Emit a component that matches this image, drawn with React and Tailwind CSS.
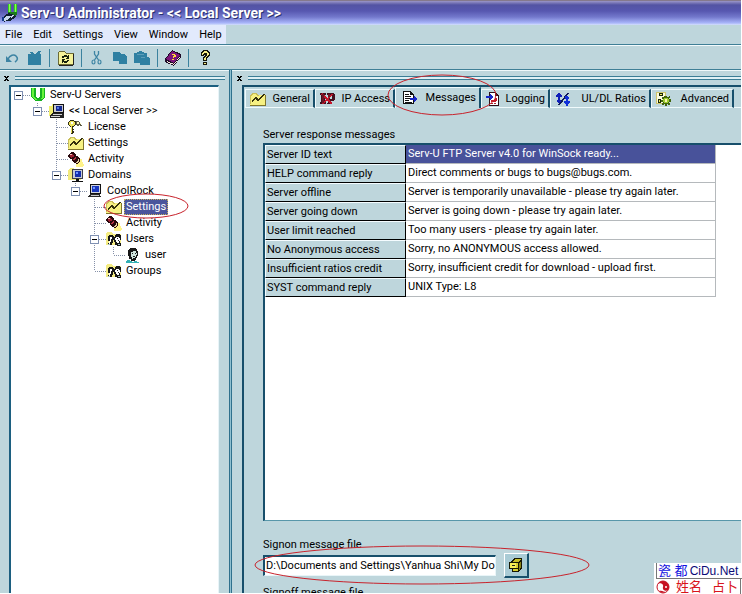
import React from "react";

const svgProps = { shapeRendering: "crispEdges", "aria-hidden": true, className: "block shrink-0" };

function Icon({ w = 16, h = 16, children }) {
  return (
    <svg {...svgProps} width={w} height={h} viewBox={`0 0 ${w} ${h}`} fill="none">
      {children}
    </svg>
  );
}

const AppIcon = () => (
  <Icon w={18} h={18}>
    <path d="M7 0h3v8H7zM13 0h3v8h-3z" fill="#35d11c" />
    <path d="M8 0h1v9H8zM14 0h1v9h-1z" fill="#8bff50" />
    <path d="M7 8h9v2l-2 2H9l-2-2z" fill="#1c7a1c" />
    <path d="M1 16l3-5 4-2 5 2 2 2-6 4H5l-2 1z" fill="#102030" />
    <path d="M2 15l3-3h3l2 1-4 3-3 1zM9 12l3-1 1 1-3 2z" fill="#c8d8ee" />
    <path d="M1 13h2v4H1z" fill="#153b8c" />
  </Icon>
);

const UndoIcon = () => (
  <svg width="16" height="16" viewBox="0 0 16 16" fill="none" className="block shrink-0" aria-hidden="true">
    <path d="M2 6v6h6z" fill="#3d84a3" />
    <path d="M4 9c2-4 6-5 8-3s2 4-1 6" stroke="#3d84a3" strokeWidth="1.600" />
  </svg>
);
const StopIcon = () => (
  <Icon>
    <path d="M2 4h3l-1-2h2l3 2 4-3 2 0-1 3h1v11H2z" fill="#2f80a2" />
  </Icon>
);
const RefreshFolderIcon = () => (
  <Icon w={17}>
    <path d="M1 14V3l2-2h4l2 2h7v11z" fill="#f4f299" stroke="#6b6a35" />
    <path d="M2 15h14M16 4v11" stroke="#222" />
    <path d="M5 8V6h2V5h3v1h1V5h1v4H9V8h1V7H7v1zM5 13V9h3v1H7v1h3v-1h2v1h-1v1h-1v1H7v-1H6v1z" fill="#18220c" />
  </Icon>
);
const CutIcon = () => (
  <svg width="16" height="16" viewBox="0 0 16 16" fill="none" stroke="#3d84a3" className="block shrink-0" aria-hidden="true">
    <path d="M5.500 1v3l4 6M9.500 1v3l-4 6" strokeWidth="1.300" />
    <ellipse cx="4.500" cy="12" rx="1.500" ry="2" strokeWidth="1.200" />
    <ellipse cx="10.500" cy="12" rx="1.500" ry="2" strokeWidth="1.200" />
  </svg>
);
const CopyIcon = () => (
  <Icon>
    <path d="M2 2h6l2 2h3l4 4v6H8v-3H2z" fill="#2f80a2" />
  </Icon>
);
const PasteIcon = () => (
  <Icon w={17}>
    <path d="M1 3h3V2h2V1h3v1h2v1h3v4h1l2 2v6H7v-2H1z" fill="#2f80a2" />
    <path d="M4 4.500h7M8 7.500h4" stroke="#5c9db8" />
  </Icon>
);
const BookIcon = () => (
  <Icon>
    <path d="M0 9L7 0l9 4v3l-7 9-9-4z" fill="#1d0a28" />
    <path d="M1 9l6-8 8 4-6 8z" fill="#7d1479" />
    <path d="M2 11l7 3 6-8v1l-6 8-7-3z" fill="#f5e9d8" />
    <path d="M7 4h3v1h1v2H9v1H8V6h1V5H7zM7 9h2v1H7z" fill="#ffdb3c" />
  </Icon>
);
const HelpIcon = () => (
  <Icon w={11}>
    <path d="M1 2h1V1h1V0h5v1h1v1h1v4H9v1H8v1H7v3H3V7h1V6h1V5H4v1H1zM3 12h4v3H3z" fill="#16160a" />
    <path d="M2 3h1V2h1V1h3v1h1v1h1v2H8v1H7v1H6v3H4V8h1V7h1V6h1V3H4v1H3v1H2zM4 13h2v1H4z" fill="#f6ee85" />
  </Icon>
);

const ServersIcon = () => (
  <Icon>
    <path d="M1 1h5v8l1 2h2l1-2V1h5v9l-3 4H5l-4-4z" fill="#17b321" />
    <path d="M2 1h2v9l3 3H5l-3-3zM12 1h2v9l-2 2h-1l1-2z" fill="#67f43c" />
  </Icon>
);
const ServerIcon = () => (
  <Icon>
    <path d="M0 3h3V1h3v2h4v10H0z" fill="#f2ee70" />
    <path d="M4 1h11v9H4z" fill="#111" />
    <path d="M5 2h9v7H5z" fill="#c9c9cf" />
    <path d="M7 3h6v5H7z" fill="#142a92" />
    <path d="M8 4h2v2H8z" fill="#5274e4" />
    <path d="M3 10h11l1 1v4H1v-2z" fill="#222" />
    <path d="M4 11h9v1H3zM2 13h9v1H2z" fill="#d5d5d5" />
  </Icon>
);
const KeysIcon = () => (
  <Icon>
    <path d="M2 1h4v1h2v4H7v1H6v1H5v2h1v1H5v1h1v2H5v1H3V8H2V7H1V6H0V3h1V2h1z" fill="#312e12" />
    <path d="M2 2h4v1h1v3H6v1H4v7H3V7H2V6H1V3h1z" fill="#efe45c" />
    <path d="M3 3h2v2H3z" fill="#fff" />
    <path d="M8 2h3v1h1v1h1v2h1v1h-2V6h-1v1H9V6H8z" fill="#5d5b45" />
    <path d="M9 3h2v2H9zM12 4h1v1h-1z" fill="#f8f3c0" />
  </Icon>
);
const SettingsIcon = () => (
  <Icon>
    <path d="M0 13V4l2-2h4l2 2h7v10H0z" fill="#f6f182" />
    <path d="M0 14.500h15.500V4" stroke="#80752c" />
    <path d="M0.500 13V4.500h1v-1h1v-1h4v1h1v1H9" stroke="#c9be58" />
    <path d="M2 11V9h1V8h1V7h1V6h2v1h1v1h1V7h1V6h1V5h1V4h1V3h2v1h-1v1h-1v1h-1v1h-1v1h-1v1H9v1H7V9H6V8H5v1H4v1H3v1z" fill="#34310d" />
  </Icon>
);
const ActivityIcon = () => (
  <Icon>
    <path d="M9 11l4-4 3 7-1 2H8z" fill="#fff38a" />
    <path d="M0 4h1V3h1V2h1V1h3v1h1v1h1v2h2v1h1v1h1v4h-1v1h-1v1H8v-1H6v-1H5v-1H4V8H2V7H1V6H0z" fill="#28070c" />
    <path d="M2 4h1V3h2v1h1v2H4v1H3V6H2z" fill="#9a1e30" />
    <path d="M2 3h2v1H2z" fill="#efb4b4" />
    <path d="M8 11h1v-1h1V8h1v3h-1v1H8z" fill="#e0d0a4" />
    <path d="M5 8h1V7h1V6h1v2H7v1H5z" fill="#b53547" />
  </Icon>
);
const DomainsIcon = () => (
  <Icon>
    <path d="M0 3l2-2h4l1 2h6v10H0z" fill="#f2e97c" />
    <path d="M4 2h11v10H4z" fill="#3f3f49" />
    <path d="M5 3h9v8H5z" fill="#c7cbd5" />
    <path d="M7 4h6v6H7z" fill="#1630ad" />
    <path d="M8 5h2v2H8z" fill="#6d95ff" />
    <path d="M8 12h3v2h4v1H4v-1h4z" fill="#111" />
  </Icon>
);
const ComputerIcon = () => (
  <Icon>
    <path d="M3 1h11v10H3z" fill="#111" />
    <path d="M4 2h9v8H4z" fill="#cfd3df" />
    <path d="M5 3h7v6H5z" fill="#1937be" />
    <path d="M6 4h2v2H6z" fill="#7199ff" />
    <path d="M4 11h9l1 3H1v-1z" fill="#292929" />
    <path d="M4 12h8v1H3z" fill="#ccc" />
  </Icon>
);
const UsersIcon = () => (
  <Icon>
    <path d="M0 3l1-2h5l1 2h8v11H0z" fill="#f4ec83" />
    <path d="M3 4h4v1h1v1h1V4h1V3h4v1h1v5h-1v3h1v3h-4v-1H9v-3H8V9H7v3H6v2H2v-2h1v-2H2V5h1z" fill="#171717" />
    <path d="M4 6h2v2H5v3H4v2H3v-3h1zM10 6h3v1h1v3h-1v2h-2v-1h-1V9H9V7h1z" fill="#fff" />
    <path d="M11 7h1v1h-1zM12 9h1v1h-1z" fill="#222" />
    <path d="M2 13h2v1H2zM12 13h2v1h-2z" fill="#a9c9c8" />
  </Icon>
);
const UserIcon = () => (
  <Icon>
    <path d="M4 2h1V1h6v1h1v2h1v5h-1v2h-1v2h-1v1H6v-2H4V9H3V3h1z" fill="#171717" />
    <path d="M6 5h2V4h3v2h1v2h-1v2h-1v1H8v1H7v-2H6z" fill="#cfe4de" />
    <path d="M7 6h1v1H7zM10 6h1v1h-1zM8 9h2v1H8z" fill="#202020" />
    <path d="M1 14h1v-1h3v1h2v1h2v-1h3v1h2v1H1z" fill="#34b0b5" />
  </Icon>
);
const IpIcon = () => (
  <Icon>
    <path d="M0 2h6v2H5v7h1v2H0v-2h1V4H0zM7 2h6l2 2v4l-2 2h-2v2h1v1H7v-1h1V4H7zM10 4v4h2V4z" fill="#421020" fillRule="evenodd" />
    <path d="M2 3l10 10M12 3L3 13" stroke="#c5152a" strokeWidth="1.500" />
    <path d="M2 3h2v9H2zM8 3h2v3H8z" fill="#6e1625" />
  </Icon>
);
const MessagesIcon = () => (
  <Icon>
    <path d="M1 1h8v1h1v1h1v1h1v10H1z" fill="#111" />
    <path d="M2 2h6v3h3v8H2z" fill="#fff" />
    <path d="M3 4.500h4M3 6.500h6M3 8.500h5M3 10.500h4M3 12.500h7" stroke="#111" />
    <path d="M8 8h4V6h1v1h1v1h1v2h-1v1h-1v1h-1v-2H8z" fill="#1726c9" />
  </Icon>
);
const LoggingIcon = () => (
  <Icon>
    <path d="M3 1h7v1h1v1h1v1h1v11H3z" fill="#2c1018" />
    <path d="M4 2h5v3h3v9H4z" fill="#fff" />
    <path d="M9 7.500h3M5 12.500h6" stroke="#a71b2b" strokeDasharray="2 1" />
    <path d="M5 10.500l2-1 2 1 2-3" stroke="#c51b2b" strokeWidth="1.500" />
    <path d="M0 5h4V3h1v1h1v1h1v2H6v1H5v1H4V7H0z" fill="#1726c9" />
  </Icon>
);
const RatiosIcon = () => (
  <Icon>
    <path d="M3 2h2v1h1v1h1v2H5v3h1v2H5v1H3v-1H2V9h1V6H1V4h1V3h1z" fill="#1020b8" />
    <path d="M4 14L13 2" stroke="#101a58" strokeWidth="1.500" />
    <path d="M10 5h3v1h1v2h-1v2h2v2h-1v1h-1v2h-2v-2h-1v-1H9v-2h2V8h-1z" fill="#1030d8" />
  </Icon>
);
const AdvancedIcon = () => (
  <Icon>
    <path d="M0.500 1.500h9v11h-9z" fill="#fbfbe0" stroke="#cfc66c" />
    <path d="M3 2h4v3H3zM2 8h3v4H2z" fill="#182808" />
    <path d="M4 3h2v1H4zM3 9h1v2H3z" fill="#eee65f" />
    <path d="M8 5h3v1h2V5h1v2h-1v1h2v3h-2v1h1v2h-2v-1h-1v2H9v-2H8v1H6v-2h1v-1H5V9h2V8H6V6h2z" fill="#42660d" />
    <path d="M8 7h4v1h1v3h-1v1H8v-1H7V8h1z" fill="#9dca2e" />
    <path d="M9 8h2v3H9z" fill="#f4f3b2" />
  </Icon>
);
const BrowseIcon = () => (
  <Icon>
    <path d="M3 4h1V3h1V2h1V1h8v11h-1v1h-1v1h-1v1H4v-3H1V5h2z" fill="#171703" />
    <path d="M5 4h1V3h1V2h6v1h-1v1h-1v1H5z" fill="#c6bd26" />
    <path d="M11 6h1V5h1v6h-1v2h-1z" fill="#8b8418" />
    <path d="M5 12h5v2H5zM8 6h2v5H8z" fill="#d8cf30" />
    <path d="M2 6h6v5H2z" fill="#f8ef57" />
    <path d="M4 8h3v1H4z" fill="#222" />
  </Icon>
);
const YinYang = () => (
  <svg width="14" height="14" viewBox="0 0 14 14" className="block shrink-0" aria-hidden="true">
    <circle cx="7" cy="7" r="6" fill="#fff" stroke="#c61222" />
    <path d="M1 7a6 6 0 0 1 12 0 3 3 0 0 1-6 0 3 3 0 0 0-6 0z" fill="#c61222" transform="rotate(15 7 7)" />
    <path d="M3 11a6 6 0 0 0 7 1c-2 0-4-2-7-1z" fill="#c61222" />
    <circle cx="10" cy="7" r="1" fill="#fff" />
  </svg>
);

const menus = ["File", "Edit", "Settings", "View", "Window", "Help"];

/* Guide cells: b blank, v vertical, t tee, c corner, e/u/d expander (alone, line above, line above and below) */
const tree = [
  { label: "Serv-U Servers", guides: "e", icon: ServersIcon },
  { label: "<< Local Server >>", guides: "bu", icon: ServerIcon },
  { label: "License", guides: "bbt", icon: KeysIcon },
  { label: "Settings", guides: "bbt", icon: SettingsIcon },
  { label: "Activity", guides: "bbt", icon: ActivityIcon },
  { label: "Domains", guides: "bbu", icon: DomainsIcon },
  { label: "CoolRock", guides: "bbbu", icon: ComputerIcon },
  { label: "Settings", guides: "bbbbt", icon: SettingsIcon, selected: true },
  { label: "Activity", guides: "bbbbt", icon: ActivityIcon },
  { label: "Users", guides: "bbbbd", icon: UsersIcon },
  { label: "user", guides: "bbbbvc", icon: UserIcon },
  { label: "Groups", guides: "bbbbc", icon: UsersIcon },
];

function Guide({ kind }) {
  const up = "vtcud".includes(kind);
  const down = "vtd".includes(kind);
  const across = "tceud".includes(kind);
  const box = "eud".includes(kind);
  const art = (
    <Icon w={19} h={16}>
      <g stroke="#8590a8" strokeDasharray="1 1">
        {up && <path d="M7.500 0V8" />}
        {down && <path d="M7.500 8V16" />}
        {across && <path d="M8 8.500H19" />}
      </g>
      {box && (
        <>
          <rect x="3.500" y="4.500" width="8" height="8" fill="#fff" stroke="#7f90b2" />
          <path d="M5 8.500h5" stroke="#000" />
        </>
      )}
    </Icon>
  );
  return box ? (
    <button type="button" aria-label="Collapse" className="block">{art}</button>
  ) : art;
}

const tabs = [
  { label: "General", icon: SettingsIcon, cls: "w-[70px]" },
  { label: "IP Access", icon: IpIcon, cls: "w-[80px]" },
  { label: "Messages", icon: MessagesIcon, cls: "w-[86px]", active: true },
  { label: "Logging", icon: LoggingIcon, cls: "w-[69px]" },
  { label: "UL/DL Ratios", icon: RatiosIcon, cls: "w-[101px]" },
  { label: "Advanced", icon: AdvancedIcon, cls: "w-[83px]" },
];

const messages = [
  ["Server ID text", "Serv-U FTP Server v4.0 for WinSock ready..."],
  ["HELP command reply", "Direct comments or bugs to bugs@bugs.com."],
  ["Server offline", "Server is temporarily unavailable - please try again later."],
  ["Server going down", "Server is going down - please try again later."],
  ["User limit reached", "Too many users - please try again later."],
  ["No Anonymous access", "Sorry, no ANONYMOUS access allowed."],
  ["Insufficient ratios credit", "Sorry, insufficient credit for download - upload first."],
  ["SYST command reply", "UNIX Type: L8"],
];

const Separator = () => <span className="h-[18px] w-px bg-[#3b829e]" />;

function ToolButton({ label, children }) {
  return <button type="button" aria-label={label} className="flex items-center justify-center">{children}</button>;
}

function DockHandle({ label }) {
  return (
    <div className="flex h-[14px] shrink-0 items-center gap-[5px]">
      <button type="button" aria-label={label} className="flex w-[7px] items-center">
        <Icon w={7} h={7}>
          <path d="M1 1h2v1h1V1h2v1H5v1H4v1h1v1h1v1H4V5H3v1H1V5h1V4h1V3H2V2H1z" fill="#000" />
        </Icon>
      </button>
      <span className="h-[4px] flex-1 border-y border-[#3b7d95] bg-[#dff0f5]" />
    </div>
  );
}

export default function App() {
  return (
    <div className="relative h-screen overflow-hidden bg-white pr-px pb-px font-[Roboto,'Liberation_Sans',sans-serif] text-[11px] leading-4 text-black">
      <div className="flex h-full flex-col overflow-hidden bg-[#bed6dc]">
        <header className="flex h-[25px] shrink-0 items-center gap-[2px] border-t border-[#85798c] bg-[linear-gradient(#9b96c9_0px,#5353a3_4px,#5757b0_10px,#7378cc_16px,#a9b6fa_22px,#d4e0fb_24px)] pl-px text-white">
          <AppIcon />
          <h1 className="text-[14px] font-bold [text-shadow:1px_1px_0_#28306e]">Serv-U Administrator - &lt;&lt; Local Server &gt;&gt;</h1>
        </header>

        <nav className="flex h-[20px] shrink-0 border-b border-[#3f7f96]">
          <div className="flex h-[19px] items-center gap-[11px] bg-[#e2eafc] pr-1 pl-[5px]">
            {menus.map((m) => (
              <button key={m} type="button">{m}</button>
            ))}
          </div>
        </nav>

        <div className="flex h-[25px] shrink-0 items-center gap-[7px] border-t border-b border-t-[#f2fafc] border-b-[#3f7f96] pl-1">
          <div className="flex gap-[6px]">
            <ToolButton label="Undo"><UndoIcon /></ToolButton>
            <ToolButton label="Stop"><StopIcon /></ToolButton>
          </div>
          <Separator />
          <ToolButton label="Refresh"><RefreshFolderIcon /></ToolButton>
          <Separator />
          <div className="flex gap-[6px]">
            <ToolButton label="Cut"><CutIcon /></ToolButton>
            <ToolButton label="Copy"><CopyIcon /></ToolButton>
            <ToolButton label="Paste"><PasteIcon /></ToolButton>
          </div>
          <Separator />
          <ToolButton label="Manual"><BookIcon /></ToolButton>
          <Separator />
          <div className="pl-1">
            <ToolButton label="Help"><HelpIcon /></ToolButton>
          </div>
        </div>

        <div className="flex min-h-0 flex-1">
          <aside className="flex w-[229px] shrink-0 flex-col border-t border-[#eef8fa] pr-1 pl-[3px]">
            <DockHandle label="Close server list" />
            <ul className="mr-[6px] ml-[6px] flex-1 overflow-hidden border-t-2 border-r border-l-2 border-t-[#1c5f80] border-r-[#e8f4f8] border-l-[#1c5f80] bg-white">
              {tree.map((n, i) => (
                <li key={i} className="flex h-4 items-center">
                  {n.guides.split("").map((g, k) => <Guide key={k} kind={g} />)}
                  <n.icon />
                  <span className={n.selected ? "ml-[2px] bg-[#4a559c] px-[2px] leading-4 text-white outline-dotted outline-1 -outline-offset-1 outline-[#c4b060]" : "pl-1"}>{n.label}</span>
                </li>
              ))}
            </ul>
          </aside>

          <div className="w-[3px] shrink-0 border-x border-[#2f718d] bg-[#8fc0d0]" />

          <main className="flex min-w-0 flex-1 flex-col border-t border-[#eef8fa] pl-1">
            <DockHandle label="Close settings" />
            <div className="ml-[6px] flex min-h-0 flex-1 flex-col border-t-2 border-l-2 border-[#174f6b]">
              <div role="tablist" className="flex h-[21px] shrink-0 items-end pl-px">
                {tabs.map((t) => (
                  <button
                    key={t.label}
                    type="button"
                    role="tab"
                    aria-selected={!!t.active}
                    className={`flex shrink-0 items-center justify-between border-t border-l border-[#f0fafc] border-r-2 border-r-[#174f6b] pr-[3px] ${t.active ? "h-[21px] pb-px pl-[6px]" : "h-[19px] border-b pl-1"} ${t.cls}`}
                  >
                    <t.icon />
                    {t.label}
                  </button>
                ))}
                <span className="flex-1 border-b border-[#f0fafc]" />
              </div>

              <div className="flex min-h-0 flex-1 flex-col pt-[19px] pl-[19px]">
                <h2 id="responses">Server response messages</h2>
                <div className="min-h-0 flex-1 overflow-hidden border-t-2 border-b border-l-2 border-t-[#174f6b] border-b-[#5897aa] border-l-[#174f6b] bg-white">
                  <table aria-labelledby="responses" className="w-[451px] table-fixed border-separate border-spacing-0 text-left">
                    <tbody>
                      {messages.map(([k, v], i) => (
                        <tr key={k} className="h-[19px]">
                          <th scope="row" className="w-[141px] border-t border-r border-b border-l border-t-[#f4fcff] border-r-black border-b-black border-l-[#f4fcff] bg-[#bed6dc] p-0 pl-px font-normal leading-4">{k}</th>
                          <td className={`border-r border-b border-[#b5b9bc] p-0 pl-[2px] leading-4 ${i === 0 ? "bg-[#48529a] text-white" : ""}`}>{v}</td>
                        </tr>
                      ))}
                    </tbody>
                  </table>
                </div>
                <div className="flex h-[72px] shrink-0 flex-col overflow-hidden pt-4">
                  <label htmlFor="signon">Signon message file</label>
                  <div className="flex h-[24px] shrink-0 items-center gap-2">
                    <input
                      id="signon"
                      type="text"
                      defaultValue="D:\Documents and Settings\Yanhua Shi\My Do"
                      className="h-[21px] w-[233px] border-t-2 border-r border-b border-l-2 border-t-[#174f6b] border-r-[#e9f5f8] border-b-[#e9f5f8] border-l-[#174f6b] bg-white pl-px"
                    />
                    <button type="button" aria-label="Browse" className="flex h-[25px] w-[25px] items-center justify-center border-t border-r-2 border-b-2 border-l border-t-white border-r-[#174f6b] border-b-[#174f6b] border-l-white bg-[#a9cbd5]">
                      <BrowseIcon />
                    </button>
                  </div>
                  <span className="mt-2 shrink-0">Signoff message file</span>
                </div>
              </div>
            </div>
          </main>
        </div>
      </div>

      <svg className="pointer-events-none absolute top-0 left-0" width="742" height="594" viewBox="0 0 742 594" fill="none" stroke="#c8232c" aria-hidden="true">
        <ellipse cx="442" cy="95" rx="54" ry="20" />
        <ellipse cx="146" cy="206" rx="42" ry="12" />
        <ellipse cx="422" cy="565" rx="167" ry="19" />
      </svg>

      <div className="absolute right-0 bottom-0 w-[88px] bg-white pl-[2px] font-['Liberation_Sans','Noto_Sans_CJK_SC',sans-serif] text-[13px]">
        <div className="flex h-4 items-center gap-[2px] border-b border-l border-[#777] pl-px text-[#0b0b78]">
          <span className="text-[#1212e0]">瓷 都</span>
          <span className="text-[12px]">CiDu.Net</span>
        </div>
        <div className="mr-px flex h-[15px] items-center gap-[6px] border-r border-[#777] text-[#d8141c]">
          <YinYang />
          <span>姓名</span>
          <span className="pl-1">占卜</span>
        </div>
      </div>
    </div>
  );
}
